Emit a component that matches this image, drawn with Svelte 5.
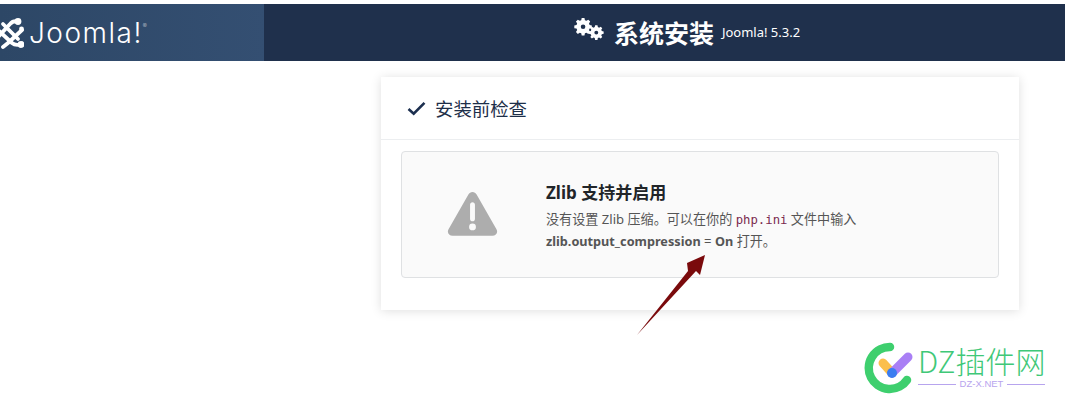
<script>
  const version = 'Joomla! 5.3.2';
</script>

<header class="topbar">
  <div class="brand">
    <svg class="logo-mark" viewBox="0 0 24 32" width="24" height="32" aria-hidden="true">
      <g fill="none" stroke="#fff" stroke-linecap="round">
        <path d="M3 7 L18 22" stroke-width="3.800" />
        <path d="M-2 13 L12 26 Q15 28.500 20 27.500" stroke-width="3.800" />
        <path d="M18 4.500 Q13 3.500 10 7 L-2 20" stroke-width="3.800" />
        <path d="M22 13 L8 26 L3 30" stroke-width="3.800" />
      </g>
      <circle cx="18" cy="4.500" r="3.400" fill="#fff" />
      <circle cx="21" cy="27.500" r="3.400" fill="#fff" />
      <circle cx="21.500" cy="12" r="2.400" fill="#fff" />
    </svg>
    <span class="wordmark">Joomla!<sup>®</sup></span>
  </div>
  <div class="title-area">
    <svg class="gears" viewBox="0 0 34 26" width="32" height="24" aria-hidden="true">
      <g fill="#fff">
        <path fill-rule="evenodd" d="M9 1h3l.5 2.4 1.6.7 2.1-1.3 2 2-1.3 2.1.7 1.6 2.4.5v3l-2.4.5-.7 1.6 1.3 2.1-2 2-2.1-1.3-1.6.7-.5 2.4H9l-.5-2.4-1.6-.7-2.1 1.3-2-2 1.3-2.1-.7-1.6L1 12V9l2.4-.5.7-1.6-1.3-2.1 2-2 2.1 1.3 1.600-.7zM10.500 8a2.500 2.500 0 1 0 0 5 2.500 2.500 0 0 0 0-5z" transform="translate(-1 -1)" />
        <path fill-rule="evenodd" d="M9 1h3l.5 2.4 1.6.7 2.1-1.3 2 2-1.3 2.1.7 1.6 2.4.5v3l-2.4.5-.7 1.6 1.3 2.1-2 2-2.1-1.3-1.6.7-.5 2.4H9l-.5-2.4-1.6-.7-2.1 1.3-2-2 1.3-2.1-.7-1.6L1 12V9l2.400-.5.7-1.6-1.3-2.1 2-2 2.1 1.3 1.600-.7zM10.500 8a2.500 2.500 0 1 0 0 5 2.500 2.500 0 0 0 0-5z" transform="translate(15 7) scale(.84)" />
      </g>
    </svg>
    <h1>系统安装</h1>
    <span class="version">{version}</span>
  </div>
</header>

<main class="page">
  <section class="card">
    <div class="card-head">
      <svg viewBox="0 0 20 16" width="19" height="15" aria-hidden="true">
        <path d="M1.500 8.500 L7 13.500 L18.500 2" fill="none" stroke="#1c2f4f" stroke-width="2.800" />
      </svg>
      <h2>安装前检查</h2>
    </div>
    <div class="card-body">
      <div class="notice">
        <svg class="warn" viewBox="0 0 52 46" width="51" height="45" aria-hidden="true">
          <path fill-rule="evenodd" fill="#adadad" d="M26 1c1.800 0 3.300 1 4.200 2.500l20.300 35.500c1.900 3.300-.4 6.800-4.200 6.800H5.700c-3.800 0-6.100-3.500-4.200-6.800L21.800 3.500C22.700 2 24.200 1 26 1zM23.500 14v14.500c0 1.300 1.100 2.400 2.500 2.400s2.500-1.100 2.500-2.400V14c0-1.300-1.100-2.400-2.500-2.400s-2.500 1.100-2.500 2.400zM26 33.200a3.500 3.500 0 1 0 0 7 3.500 3.500 0 0 0 0-7z" />
        </svg>
        <div class="notice-text">
          <h3>Zlib 支持并启用</h3>
          <p>没有设置 Zlib 压缩。可以在你的 <code>php.ini</code> 文件中输入</p>
          <p><strong>zlib.output_compression</strong> = <strong>On</strong> 打开。</p>
        </div>
      </div>
    </div>
  </section>
</main>

<svg class="arrow" viewBox="0 0 80 90" width="80" height="90" aria-hidden="true">
  <path fill="#7a0a0c" d="M1 89 L52 25 L51 17 L69 9 L64 29 L60 25 Z" />
</svg>

<div class="watermark">
  <svg viewBox="0 0 56 60" width="56" height="60" aria-hidden="true">
    <path d="M28 7 A21 21 0 1 0 45 40" fill="none" stroke="#3ecf6e" stroke-width="8.500" stroke-linecap="round" />
    <path d="M21 23 L30 33" stroke="#fbbf4d" stroke-width="9" stroke-linecap="round" />
    <path d="M30 33 L46 17" stroke="#a97ff5" stroke-width="9" stroke-linecap="round" />
    <circle cx="30" cy="33" r="5" fill="#3b7df0" />
  </svg>
  <div class="wm-text">
    <div class="wm-name">DZ插件网</div>
    <div class="wm-sub"><span>DZ-X.NET</span></div>
  </div>
</div>

<style>
  :global(body) {
    margin: 0;
    background: #fff;
    font-family: "Noto Sans", "Noto Sans CJK SC", sans-serif;
    color: #495057;
  }

  .topbar {
    display: flex;
    height: 57px;
    margin-top: 4px;
    background: #1f304c;
    color: #fff;
  }

  .brand {
    display: flex;
    align-items: center;
    width: 264px;
    flex: none;
    overflow: hidden;
    background: linear-gradient(90deg, #2d4766, #344f72);
  }

  .logo-mark {
    flex: none;
    overflow: hidden;
  }

  .wordmark {
    margin-left: 5px;
    font-family: "Inter", sans-serif;
    font-weight: 300;
    font-size: 28px;
    letter-spacing: 1.500px;
    line-height: 1;
  }

  .wordmark sup {
    font-size: 6px;
    vertical-align: 15px;
    line-height: 0;
    opacity: 0.7;
  }

  .title-area {
    flex: 1;
    display: flex;
    align-items: center;
    justify-content: center;
    padding-left: 45px;
  }

  .gears {
    margin-right: 8px;
    margin-bottom: 6px;
  }

  h1 {
    margin: 0 8px 0 0;
    font-size: 25px;
    font-weight: 700;
    line-height: 1;
    font-family: "Noto Sans CJK SC", sans-serif;
  }

  .version {
    font-size: 13px;
    line-height: 1;
    margin-bottom: 1px;
  }

  .page {
    display: flex;
    justify-content: flex-end;
    padding: 16px 46px 30px 0;
  }

  .card {
    width: 638px;
    height: 233px;
    background: #fff;
    box-shadow: 0 1px 10px rgba(0, 0, 0, 0.13);
  }

  .card-head {
    display: flex;
    align-items: center;
    gap: 9px;
    height: 63px;
    padding-left: 26px;
    box-sizing: border-box;
    border-bottom: 1px solid #eceef0;
  }

  h2 {
    margin: 0;
    font-size: 18.400px;
    font-weight: 400;
    color: #1e2f49;
    font-family: "Noto Sans CJK SC", sans-serif;
  }

  .card-body {
    padding: 11px 20px 0;
  }

  .notice {
    display: flex;
    align-items: center;
    height: 127px;
    box-sizing: border-box;
    background: #fafafa;
    border: 1px solid #dfe1e3;
    border-radius: 4px;
    padding-left: 45px;
  }

  .warn {
    flex: none;
    margin-bottom: 3px;
  }

  .notice-text {
    margin-left: 48px;
    padding-top: 4px;
  }

  h3 {
    margin: 0 0 5px;
    font-size: 17px;
    font-weight: 700;
    line-height: 23px;
    color: #212529;
  }

  p {
    margin: 0;
    font-size: 13.100px;
    line-height: 21.500px;
    color: #555;
  }

  strong {
    font-size: 12.700px;
    font-weight: 700;
  }

  code {
    font-family: "DejaVu Sans Mono", "Liberation Mono", monospace;
    font-size: 12.300px;
    color: #7a2a4e;
  }

  .arrow {
    position: absolute;
    left: 636px;
    top: 246px;
  }

  .watermark {
    position: absolute;
    left: 862px;
    top: 340px;
    display: flex;
    align-items: flex-start;
  }

  .wm-text {
    width: 127px;
    margin-top: 3px;
  }

  .wm-name {
    font-family: "Noto Sans CJK SC", sans-serif;
    font-size: 30px;
    font-weight: 300;
    line-height: 34px;
    color: #3fc878;
    white-space: nowrap;
  }

  .wm-sub {
    display: flex;
    align-items: center;
    gap: 4px;
    margin-top: 2px;
    font-family: "Liberation Sans", sans-serif;
    font-size: 9.500px;
    line-height: 10px;
    color: #b7a4ee;
  }

  .wm-sub::before,
  .wm-sub::after {
    content: "";
    flex: 1;
    height: 1px;
    background: #b7a4ee;
  }
</style>
